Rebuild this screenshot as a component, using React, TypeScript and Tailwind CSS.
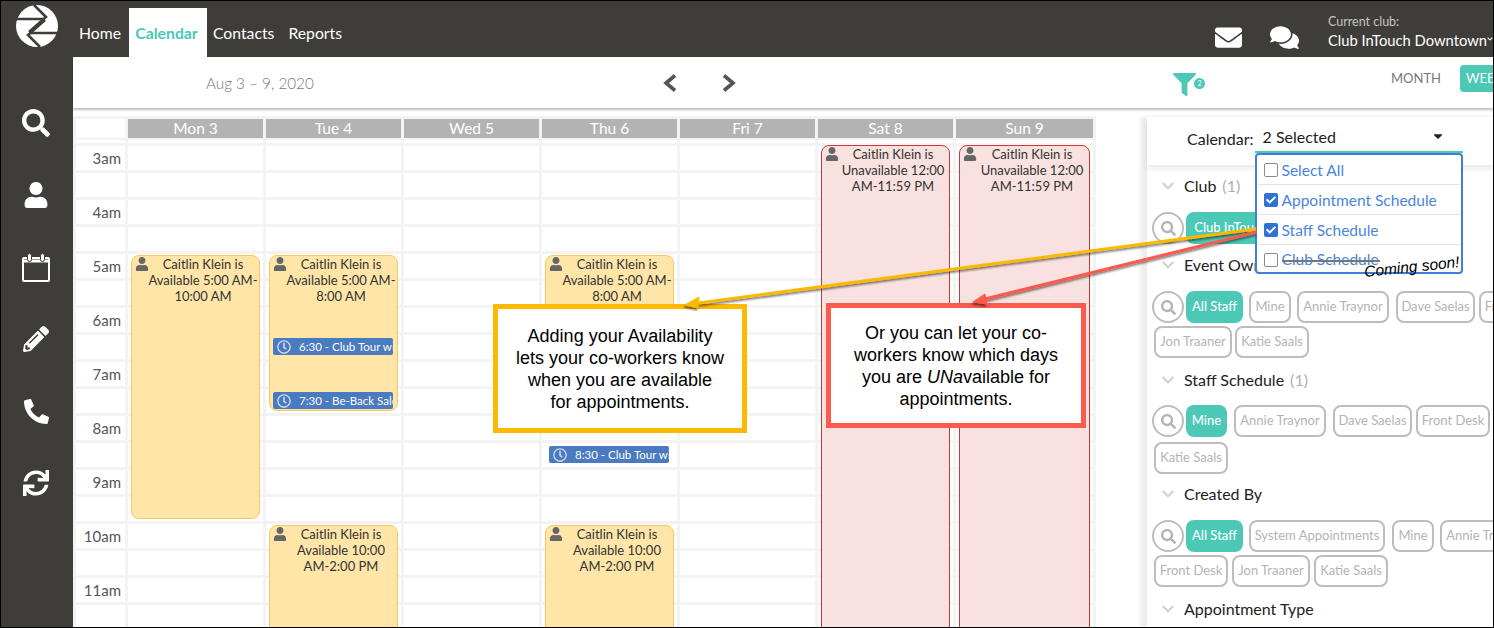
import { FaSearch, FaUser, FaPencilAlt, FaPhoneAlt, FaSync, FaEnvelope, FaComments, FaFilter, FaRegClock, FaChevronDown, FaCaretDown, FaCheck } from "react-icons/fa"

const weekDays = ["Mon 3", "Tue 4", "Wed 5", "Thu 6", "Fri 7", "Sat 8", "Sun 9"]
const hourLabels = ["3am", "4am", "5am", "6am", "7am", "8am", "9am", "10am", "11am"]

type CalendarEvent = { text: string; place: string; red?: boolean }
type Booking = { text: string; place: string }

const dayEvents: Record<string, CalendarEvent[]> = {
  "Mon 3": [{ text: "Caitlin Klein is Available 5:00 AM-10:00 AM", place: "top-[136px] h-[264px]" }],
  "Tue 4": [
    { text: "Caitlin Klein is Available 5:00 AM-8:00 AM", place: "top-[136px] h-[156px]" },
    { text: "Caitlin Klein is Available 10:00 AM-2:00 PM", place: "top-[406px] h-[220px]" },
  ],
  "Thu 6": [
    { text: "Caitlin Klein is Available 5:00 AM-8:00 AM", place: "top-[136px] h-[156px]" },
    { text: "Caitlin Klein is Available 10:00 AM-2:00 PM", place: "top-[406px] h-[220px]" },
  ],
  "Sat 8": [{ text: "Caitlin Klein is Unavailable 12:00 AM-11:59 PM", place: "top-[26px] h-[600px]", red: true }],
  "Sun 9": [{ text: "Caitlin Klein is Unavailable 12:00 AM-11:59 PM", place: "top-[26px] h-[600px]", red: true }],
}

const dayBookings: Record<string, Booking[]> = {
  "Tue 4": [
    { text: "6:30 - Club Tour with", place: "top-[219px]" },
    { text: "7:30 - Be-Back Sales", place: "top-[273px]" },
  ],
  "Thu 6": [{ text: "8:30 - Club Tour with", place: "top-[327px]" }],
}

const rowKeys = Array.from({ length: 18 }, (_, i) => i)

function Logo() {
  return (
    <svg viewBox="0 0 42 42" className="w-[42px] h-[42px]">
      <circle cx="21" cy="21" r="21" fill="#fff" />
      <path d="M18 0 L30 12 L13 27" fill="none" stroke="#3f3d39" strokeWidth="2.6" />
      <path d="M24 42 L12 30 L29 15" fill="none" stroke="#3f3d39" strokeWidth="2.6" />
      <path d="M0 14 H27 M42 28 H15" stroke="#3f3d39" strokeWidth="2.6" />
    </svg>
  )
}

function BlankCalendar() {
  return (
    <svg viewBox="0 0 28 29" className="w-[28px] h-[29px]" fill="none">
      <rect x="1" y="5" width="26" height="23" rx="1" stroke="#fff" strokeWidth="2" />
      <path d="M1 8 H27" stroke="#fff" strokeWidth="3" />
      <rect x="5.5" y="0.5" width="4" height="8" rx="2" fill="#fff" stroke="#3f3d39" strokeWidth="1" />
      <rect x="18.5" y="0.5" width="4" height="8" rx="2" fill="#fff" stroke="#3f3d39" strokeWidth="1" />
    </svg>
  )
}

function Chevron({ path, className = "" }: { path: string; className?: string }) {
  return (
    <svg viewBox="0 0 15 18" className={`shrink-0 w-[15px] h-[18px] ${className}`} fill="none">
      <path d={path} stroke="#555" strokeWidth="3.6" />
    </svg>
  )
}

function Chip({ label, active, className = "" }: { label: string; active?: boolean; className?: string }) {
  return (
    <span
      className={`shrink-0 h-[32px] flex items-center justify-center rounded-lg text-[13px] whitespace-nowrap ${
        active ? "bg-[#4bc8b6] text-white font-medium" : "border-2 border-[#bdbdbd] text-[#b4b4b4]"
      } ${className}`}
    >
      {label}
    </span>
  )
}

function SearchCircle() {
  return (
    <span className="shrink-0 -ml-[2px] -mr-[2px] w-[32px] h-[32px] rounded-full border-2 border-[#bdbdbd] flex items-center justify-center text-[#b4b4b4]">
      <FaSearch className="w-[15px] h-[15px]" />
    </span>
  )
}

function SectionTitle({ title, count }: { title: string; count?: number }) {
  return (
    <div className="flex items-center h-[22px] pl-[14px]">
      <FaChevronDown className="w-[14px] h-[14px] text-[#d2d2d2]" />
      <span className="ml-[9px] text-[16px] text-[#222]">{title}</span>
      {count !== undefined && <span className="ml-[6px] text-[16px] text-[#b0b0b0]">({count})</span>}
    </div>
  )
}

function DropdownItem({ label, checked, last }: { label: string; checked?: boolean; last?: boolean }) {
  return (
    <div className={`flex items-center h-[30px] mx-[1px] pl-[6px] ${last ? "" : "border-b border-[#e4e4e4]"}`}>
      <span
        className={`w-[14px] h-[14px] rounded-[2px] flex items-center justify-center ${
          checked ? "bg-[#2f72d8]" : "bg-white border border-[#8a8a8a]"
        }`}
      >
        {checked && <FaCheck className="w-[10px] h-[10px] text-white" />}
      </span>
      <span className={`ml-[4px] text-[15.5px] text-[#4a86dc] ${last ? "" : "pt-[2px]"}`}>{label}</span>
    </div>
  )
}

function Event({ event }: { event: CalendarEvent }) {
  return (
    <div
      className={`absolute left-[3px] right-[3px] rounded-lg border text-[13px] leading-[16px] text-[#333] text-center pl-[16px] pr-[1px] ${event.place} ${
        event.red ? "bg-[#f8e1de] border-[#c9393b]" : "bg-[#ffe5a8] border-[#f6c85f]"
      }`}
    >
      <FaUser className="absolute left-[3px] top-[1px] w-[14px] h-[14px] text-[#666]" />
      {event.text}
    </div>
  )
}

export default function App() {
  return (
    <div className="relative w-[1494px] h-[628px] overflow-hidden bg-white flex flex-col font-['Lato','Noto_Sans',sans-serif]">
      {/* Top bar */}
      <header className="h-[57px] shrink-0 bg-[#3f3d39] flex items-stretch text-white">
        <div className="w-[73px] shrink-0 flex items-center justify-center pl-[1px] pb-[5px]">
          <Logo />
        </div>
        <nav className="flex items-stretch pt-[8px] text-[15.75px]">
          <span className="ml-[6px] w-[41px] flex items-center">Home</span>
          <span className="ml-[9px] w-[78px] pr-[3px] bg-white text-[#4bc8b6] font-bold flex items-center justify-center">Calendar</span>
          <span className="ml-[6px] flex items-center">Contacts</span>
          <span className="ml-[14px] flex items-center">Reports</span>
        </nav>
        <div className="ml-auto flex items-center">
          <FaEnvelope className="w-[27px] h-[27px] mt-[17px]" />
          <FaComments className="ml-[28px] w-[29px] h-[29px] mt-[17px]" />
          <div className="relative ml-[29px] w-[166px] overflow-hidden whitespace-nowrap pt-[5px]">
            <div className="text-[12.5px] leading-[18px] text-[#c4c4c4]">Current club:</div>
            <div className="text-[14.75px] leading-[18px]">Club InTouch Downtown</div>
            <FaChevronDown className="absolute right-[1px] top-[28px] w-[6px] h-[6px]" />
          </div>
        </div>
      </header>

      <div className="flex-1 flex min-h-0">
        {/* Icon rail */}
        <aside className="w-[73px] shrink-0 bg-[#3f3d39] text-white flex flex-col items-center pt-[30px] pr-[1px]">
          <div className="h-[72px] flex items-center"><FaSearch className="w-[28px] h-[28px]" /></div>
          <div className="h-[72px] flex items-center"><FaUser className="w-[26px] h-[26px]" /></div>
          <div className="h-[72px] flex items-center"><BlankCalendar /></div>
          <div className="h-[72px] flex items-center"><FaPencilAlt className="w-[26px] h-[26px]" /></div>
          <div className="h-[72px] flex items-center"><FaPhoneAlt className="w-[25px] h-[25px]" /></div>
          <div className="h-[72px] flex items-center"><FaSync className="w-[26px] h-[26px]" /></div>
        </aside>

        <main className="relative flex-1 min-w-0 flex flex-col">
          {/* Toolbar */}
          <div className="relative z-20 h-[51px] shrink-0 bg-white shadow-[0_2px_2px_rgba(0,0,0,0.25)] flex items-center">
            <span className="ml-[133px] mt-[2px] w-[107px] shrink-0 text-[15.25px] font-light text-[#777] whitespace-nowrap">Aug 3 – 9, 2020</span>
            <Chevron path="M13 1.5 L4 9 L13 16.5" className="ml-[349px]" />
            <Chevron path="M2 1.5 L11 9 L2 16.5" className="ml-[45px]" />
            <div className="relative shrink-0 ml-[436px] mt-[3px]">
              <FaFilter className="w-[23px] h-[23px] text-[#4bc8b6]" />
              <span className="absolute left-[21px] top-[5px] w-[11px] h-[11px] rounded-full bg-[#4bc8b6] text-white text-[7px] leading-[11px] text-center">2</span>
            </div>
            <span className="shrink-0 ml-[195px] mt-[-8px] text-[13px] text-[#777]">MONTH</span>
            <span className="ml-[19px] mt-[-8px] w-[60px] h-[27px] shrink-0 rounded bg-[#4bc8b6] text-white text-[13px] flex items-center pl-[6px]">WEEK</span>
          </div>

          <div className="flex-1 min-h-0 flex">
            {/* Week grid */}
            <section className="w-[1023px] shrink-0 mt-[8px] bg-[#f3f3f3] pt-[3px] pl-[3px] pr-[3px] flex gap-[3px] overflow-hidden h-[512px]">
              <div className="w-[49px] shrink-0 flex flex-col gap-[3px]">
                <div className="h-[19px] shrink-0 bg-white" />
                <div className="h-[3px] shrink-0 mt-[-1px] bg-white" />
                {rowKeys.map((i) => (
                  <div key={i} className="h-[24px] shrink-0 bg-white pr-[4px] text-right text-[15px] leading-[24px] text-[#555]">
                    {i % 2 === 0 ? hourLabels[i / 2] : ""}
                  </div>
                ))}
              </div>
              {weekDays.map((day) => (
                <div key={day} className={`relative shrink-0 flex flex-col gap-[3px] ${day === "Sun 9" ? "w-[137px]" : "w-[135px]"}`}>
                  <div className="h-[19px] shrink-0 bg-[#b3b3b3] text-white text-[15.5px] leading-[19px] text-center">{day}</div>
                  <div className="h-[3px] shrink-0 mt-[-1px] bg-white" />
                  {rowKeys.map((i) => (
                    <div key={i} className="h-[24px] shrink-0 bg-white" />
                  ))}
                  {(dayEvents[day] ?? []).map((ev) => (
                    <Event key={ev.place} event={ev} />
                  ))}
                  {(dayBookings[day] ?? []).map((b) => (
                    <div
                      key={b.place}
                      className={`absolute left-[7px] w-[120px] h-[17px] rounded-[2px] bg-[#4a7abf] text-white text-[11.5px] leading-[17px] whitespace-nowrap overflow-hidden flex items-center ${b.place}`}
                    >
                      <FaRegClock className="shrink-0 w-[14px] h-[14px] ml-[4px] mr-[8px] text-[#d5deee]" />
                      {b.text}
                    </div>
                  ))}
                </div>
              ))}
            </section>

            {/* Filter panel */}
            <section className="relative ml-[51px] mt-[9px] w-[420px] shrink-0 bg-white shadow-[-7px_0_4px_rgba(0,0,0,0.07)]">
              <div className="h-[48px] flex items-start pl-[40px] shadow-[0_3px_6px_rgba(0,0,0,0.1)]">
                <span className="mt-[12px] text-[16px] leading-[20px] text-[#222]">Calendar:</span>
                <div className="relative ml-[1px] mt-[4px] w-[208px] h-[32px] border-b-[2px] border-[#4bc8b6] flex items-center pl-[8px] pt-[2px] text-[16px] text-[#222]">
                  2 Selected
                  <FaCaretDown className="absolute right-[18px] top-[8px] w-[14px] h-[14px] text-[#222]" />
                  <div className="absolute z-30 left-0 top-[32px] w-[208px] h-[121px] bg-white border-2 border-[#3f7fd8] rounded">
                    <DropdownItem label="Select All" />
                    <DropdownItem label="Appointment Schedule" checked />
                    <DropdownItem label="Staff Schedule" checked />
                    <DropdownItem label="Club Schedule" last />
                    <span className="absolute left-[25px] top-[105px] w-[98px] h-[2px] bg-[#777]" />
                    <span className="absolute right-[1px] top-[104px] text-[15.5px] leading-[16px] italic font-['Liberation_Sans',sans-serif] text-black -rotate-6 whitespace-nowrap">Coming soon!</span>
                  </div>
                </div>
              </div>

              <div className="pt-[10px]">
                <SectionTitle title="Club" count={1} />
                <div className="mt-[15px] pl-[7px] flex gap-[4px] items-center">
                  <SearchCircle />
                  <Chip label="Club InTouch Downtown" active className="w-[157px]" />
                </div>
                <div className="mt-[10px]"><SectionTitle title="Event Owner" /></div>
                <div className="mt-[15px] pl-[7px] w-[412px] flex flex-wrap gap-x-[4px] gap-y-[3px] items-center">
                  <SearchCircle />
                  <Chip label="All Staff" active className="w-[57px]" />
                  <Chip label="Mine" className="w-[42px] ml-[2px]" />
                  <Chip label="Annie Traynor" className="w-[92px] ml-[2px]" />
                  <Chip label="Dave Saelas" className="w-[79px] ml-[3px]" />
                  <Chip label="Front Desk" className="w-[74px]" />
                  <Chip label="Jon Traaner" className="w-[78px]" />
                  <Chip label="Katie Saals" className="w-[74px] ml-[-1px]" />
                </div>
                <div className="mt-[11px]"><SectionTitle title="Staff Schedule" count={1} /></div>
                <div className="mt-[14px] pl-[7px] w-[412px] flex flex-wrap gap-x-[4px] gap-y-[5px] items-center">
                  <SearchCircle />
                  <Chip label="Mine" active className="w-[41px]" />
                  <Chip label="Annie Traynor" className="w-[92px] ml-[3px]" />
                  <Chip label="Dave Saelas" className="w-[79px] ml-[3px]" />
                  <Chip label="Front Desk" className="w-[74px]" />
                  <Chip label="Katie Saals" className="w-[74px]" />
                </div>
                <div className="mt-[9px]"><SectionTitle title="Created By" /></div>
                <div className="mt-[15px] pl-[7px] w-[412px] flex flex-wrap gap-x-[4px] gap-y-[3px] items-center">
                  <SearchCircle />
                  <Chip label="All Staff" active className="w-[57px]" />
                  <Chip label="System Appointments" className="w-[136px] ml-[2px]" />
                  <Chip label="Mine" className="w-[42px] ml-[3px]" />
                  <Chip label="Annie Traynor" className="w-[92px] ml-[2px]" />
                  <Chip label="Front Desk" className="w-[74px]" />
                  <Chip label="Jon Traaner" className="w-[78px]" />
                  <Chip label="Katie Saals" className="w-[74px]" />
                </div>
                <div className="mt-[11px]"><SectionTitle title="Appointment Type" /></div>
              </div>
            </section>
          </div>

          {/* Callouts */}
          <div className="absolute z-40 left-[420px] top-[247px] w-[254px] h-[129px] bg-white border-[5px] border-[#fdb900] flex items-center justify-center text-center font-['Liberation_Sans',sans-serif] text-[18px] leading-[22px] text-black">
            <p>Adding your Availability<br />lets your co-workers know<br />when you are available<br />for appointments.</p>
          </div>
          <div className="absolute z-40 left-[753px] top-[246px] w-[260px] h-[125px] bg-white border-[5px] border-[#fb5a4e] flex items-center justify-center text-center font-['Liberation_Sans',sans-serif] text-[18px] leading-[22px] text-black">
            <p>Or you can let your co-<br />workers know which days<br />you are <i>UNa</i>vailable for<br />appointments.</p>
          </div>
        </main>
      </div>

      {/* Annotation arrows */}
      <svg className="absolute inset-0 z-50 w-[1494px] h-[628px] pointer-events-none" viewBox="0 0 1494 628">
        <defs>
          <filter id="arrowShadow" x="-5%" y="-50%" width="110%" height="200%">
            <feDropShadow dx="-1" dy="2" stdDeviation="1.2" floodColor="#000" floodOpacity="0.55" />
          </filter>
        </defs>
        <g filter="url(#arrowShadow)">
          <path d="M1256 229 L695 303.5" stroke="#fdb900" strokeWidth="3" fill="none" />
          <path d="M685 305 L699 297 L698 308 Z" fill="#fdb900" stroke="#fdb900" />
          <path d="M1257 232 L983 299.5" stroke="#fb5a4e" strokeWidth="3" fill="none" />
          <path d="M973 302 L985 294 L987 304 Z" fill="#fb5a4e" stroke="#fb5a4e" />
        </g>
      </svg>

      {/* Screenshot frame */}
      <div className="absolute inset-0 z-50 border border-black pointer-events-none" />
    </div>
  )
}
